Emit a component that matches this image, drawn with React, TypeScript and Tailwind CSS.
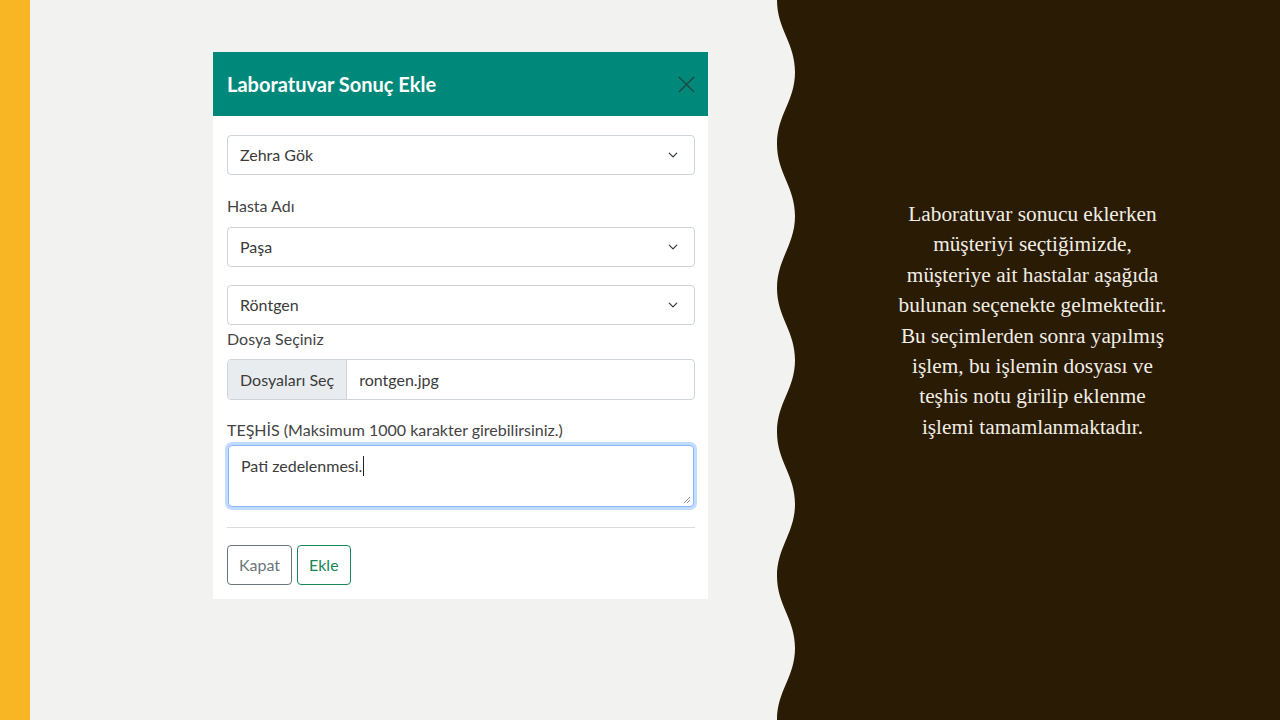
const ui = { fontFamily: "Lato, 'Noto Sans', sans-serif" };

function Chevron() {
  return (
    <svg width="14" height="10" viewBox="0 0 16 16" className="shrink-0">
      <path d="M2 5l6 6 6-6" fill="none" stroke="#343a40" strokeWidth="2" strokeLinecap="round" strokeLinejoin="round" />
    </svg>
  );
}

function FakeSelect({ value, className = "" }: { value: string; className?: string }) {
  return (
    <div className={`flex h-10 items-center justify-between rounded-[4px] border border-[#ced4da] bg-white pl-3 pr-[14px] text-base text-[#3b3b3b] ${className}`}>
      <span>{value}</span>
      <Chevron />
    </div>
  );
}

function Modal() {
  return (
    <div className="w-[495px] bg-white" style={ui}>
      <div className="flex h-16 items-center justify-between bg-[#00897b] pl-[14px] pr-[13px]">
        <h2 className="text-[20px] font-bold text-white">Laboratuvar Sonuç Ekle</h2>
        <svg width="17" height="17" viewBox="0 0 18 18">
          <path d="M1 1l16 16M17 1L1 17" stroke="#1d4a44" strokeWidth="1.6" />
        </svg>
      </div>

      <div className="pb-[14px] pl-[14px] pr-[13px] pt-[19px]">
        <FakeSelect value="Zehra Gök" />

        <p className="mt-[19px] text-base leading-6 text-[#444]">Hasta Adı</p>
        <FakeSelect value="Paşa" className="mt-[9px]" />

        <FakeSelect value="Röntgen" className="mt-[18px]" />

        <p className="mt-[2px] text-base leading-6 text-[#444]">Dosya Seçiniz</p>
        <div className="mt-2 flex h-[41px] overflow-hidden rounded-[4px] border border-[#ced4da] text-base text-[#3b3b3b]">
          <div className="flex items-center border-r border-[#ced4da] bg-[#e9ecef] px-3">Dosyaları Seç</div>
          <div className="flex items-center px-3">rontgen.jpg</div>
        </div>

        <p className="mt-[18px] text-base leading-6 text-[#444]">TEŞHİS (Maksimum 1000 karakter girebilirsiniz.)</p>
        <div className="relative mx-px mt-[3px] h-[62px] rounded-[4px] border border-[#86b7fe] bg-white px-3 py-[6px] text-base text-[#3b3b3b] shadow-[0_0_0_3px_rgba(13,110,253,0.25)]">
          <span>Pati zedelenmesi.</span>
          <span className="ml-px inline-block h-[20px] w-px translate-y-[4px] bg-[#222]" />
          <svg width="8" height="8" viewBox="0 0 8 8" className="absolute bottom-[2px] right-[2px]">
            <path d="M7 1L1 7M7 4L4 7" stroke="#8a8a8a" strokeWidth="1" />
          </svg>
        </div>

        <div className="mt-5 h-px bg-[#dcdcdc]" />

        <div className="mt-[17px] flex gap-[5px]">
          <button className="h-10 rounded-[4px] border border-[#6c757d] px-[11px] text-base text-[#6c757d]">Kapat</button>
          <button className="h-10 rounded-[4px] border border-[#198754] px-[11px] text-base text-[#198754]">Ekle</button>
        </div>
      </div>
    </div>
  );
}

const lines = [
  "Laboratuvar sonucu eklerken",
  "müşteriyi seçtiğimizde,",
  "müşteriye ait hastalar aşağıda",
  "bulunan seçenekte gelmektedir.",
  "Bu seçimlerden sonra yapılmış",
  "işlem, bu işlemin dosyası ve",
  "teşhis notu girilip eklenme",
  "işlemi tamamlanmaktadır.",
];

export default function App() {
  return (
    <div className="flex h-[720px] w-[1280px] overflow-hidden bg-[#f2f2f0]">
      <div className="w-[30px] shrink-0 bg-[#f9b624]" />

      <div className="w-[746px] shrink-0 pl-[183px] pt-[52px]">
        <Modal />
      </div>

      <svg width="19" height="720" viewBox="0 0 19 720" className="shrink-0">
        <path
          d="M19 0 L1 0 C1 29 19 43 19 72 C19 101 1 115 1 144 C1 173 19 187 19 216 C19 245 1 259 1 288 C1 317 19 331 19 360 C19 389 1 403 1 432 C1 461 19 475 19 504 C19 533 1 547 1 576 C1 605 19 619 19 648 C19 677 1 691 1 720 L19 720 Z"
          fill="#2a1b04"
        />
      </svg>

      <div className="flex-1 bg-[#2a1b04] pr-[10px] pt-[199px]">
        <p
          className="text-center text-[21.3px] leading-[30.4px] text-[#f1ede4]"
          style={{ fontFamily: "'Liberation Serif', 'Times New Roman', serif" }}
        >
          {lines.map((l) => (
            <span key={l} className="block">{l}</span>
          ))}
        </p>
      </div>
    </div>
  );
}
